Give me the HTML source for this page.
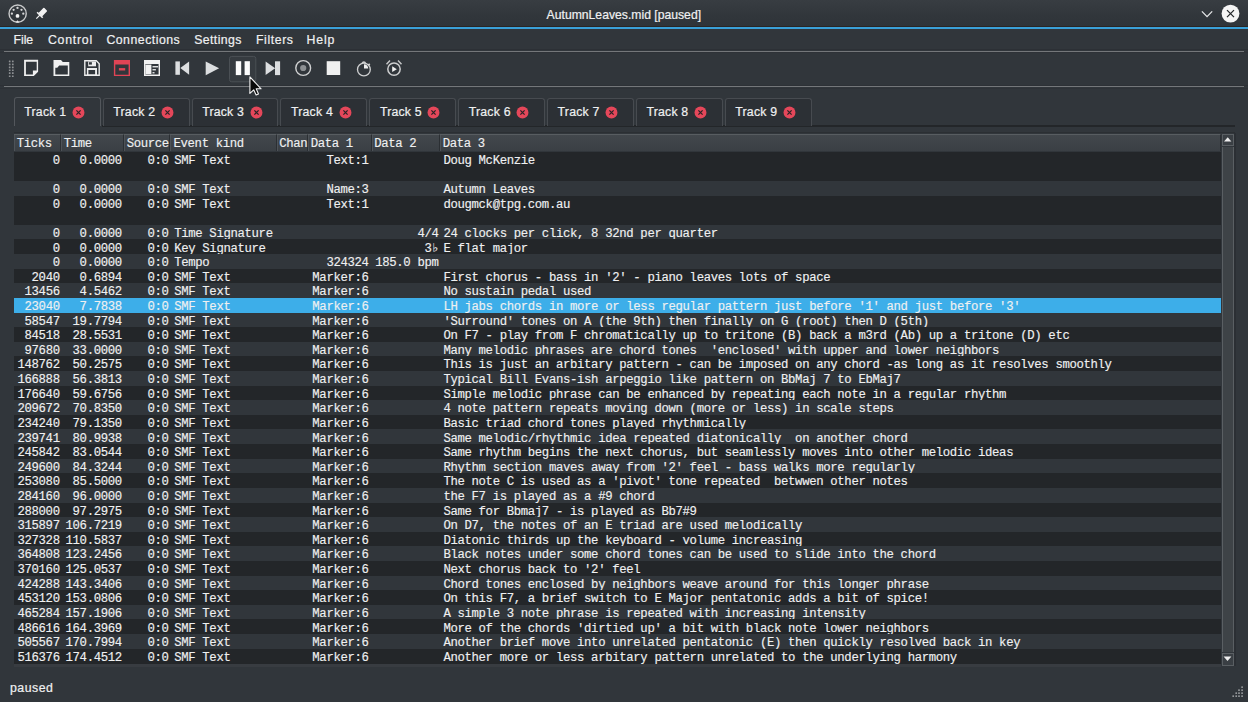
<!DOCTYPE html>
<html><head><meta charset="utf-8"><style>
*{margin:0;padding:0;box-sizing:border-box}
html,body{width:1248px;height:702px;overflow:hidden;background:#31363b}
body{position:relative;font-family:"Liberation Sans",sans-serif;color:#eff0f1}
div,svg{position:absolute}
.ui{font-size:12.3px;line-height:15px;white-space:pre;color:#eff0f1;-webkit-text-stroke:0.2px #eff0f1}
.m{font-family:"Liberation Mono",monospace;font-size:12.3px;letter-spacing:-0.345px;-webkit-text-stroke:0.15px #eff0f1;line-height:14.62px;white-space:pre;color:#eff0f1}
.row{left:13.7px;width:1207.6px}
.hs{top:133.9px;height:17.3px;background:linear-gradient(#42474c,#3a3f44);border-top:1px solid #585d61;border-right:1px solid #2b2f33;box-shadow:inset 1px 0 0 #4e5358}
.tab{border:1px solid #474b50;border-bottom:none;border-radius:3px 3px 0 0;background:#2c3035}
.tab.act{background:#31363b;border-color:#53575c}
</style></head><body>
<!-- titlebar -->
<div style="left:0;top:0;width:1248px;height:26px;background:linear-gradient(#383d42,#31363b 60%,#2f3439)"></div>
<div style="left:0;top:26px;width:1248px;height:1px;background:#2a2624"></div>
<div style="left:0;top:27px;width:1248px;height:2.2px;background:#3aa0d8"></div>
<div class="ui" style="left:546.6px;top:7.8px;font-size:12.2px">AutumnLeaves.mid [paused]</div>
<div class="ui" style="left:13.4px;top:32.9px">File</div>
<div class="ui" style="left:47.9px;top:32.9px;letter-spacing:0.78px">Control</div>
<div class="ui" style="left:106.4px;top:32.9px;letter-spacing:0.5px">Connections</div>
<div class="ui" style="left:194.2px;top:32.9px;letter-spacing:0.4px">Settings</div>
<div class="ui" style="left:256px;top:32.9px;letter-spacing:0.58px">Filters</div>
<div class="ui" style="left:306.6px;top:32.9px;letter-spacing:0.8px">Help</div>
<div style="left:0;top:49px;width:1248px;height:1.3px;background:#2c3035"></div>
<div style="left:4px;top:50.7px;width:1240px;height:1.4px;background:#74777a"></div>
<div style="left:0;top:52.3px;width:1248px;height:1px;background:#2e3237"></div>
<div style="left:0;top:84.5px;width:1248px;height:1.3px;background:#2d3136"></div>
<div style="left:4px;top:86px;width:1240px;height:1.4px;background:#74777a"></div>
<div style="left:0;top:87.6px;width:1248px;height:1px;background:#2e3237"></div>
<!-- tabs -->
<div style="left:102px;top:125.3px;width:1133px;height:1.6px;background:#232629"></div>
<div class="tab act" style="left:14.20px;top:96.6px;width:86.90px;height:29.40px"></div>
<div class="ui" style="left:24.30px;top:104.5px;letter-spacing:0.2px">Track 1</div>
<svg class="ic" style="left:72.30px;top:105.60px" width="13" height="13" viewBox="0 0 13 13"><circle cx="6.5" cy="6.5" r="5.95" fill="#e5475a"/><path d="M4.4 4.4L8.6 8.6M8.6 4.4L4.4 8.6" stroke="#2a2326" stroke-width="1.25"/></svg>
<div class="tab" style="left:102.70px;top:98.4px;width:86.90px;height:27.60px"></div>
<div class="ui" style="left:113.30px;top:104.5px;letter-spacing:0.2px">Track 2</div>
<svg class="ic" style="left:160.90px;top:105.60px" width="13" height="13" viewBox="0 0 13 13"><circle cx="6.5" cy="6.5" r="5.95" fill="#e5475a"/><path d="M4.4 4.4L8.6 8.6M8.6 4.4L4.4 8.6" stroke="#2a2326" stroke-width="1.25"/></svg>
<div class="tab" style="left:191.56px;top:98.4px;width:86.90px;height:27.60px"></div>
<div class="ui" style="left:202.16px;top:104.5px;letter-spacing:0.2px">Track 3</div>
<svg class="ic" style="left:249.76px;top:105.60px" width="13" height="13" viewBox="0 0 13 13"><circle cx="6.5" cy="6.5" r="5.95" fill="#e5475a"/><path d="M4.4 4.4L8.6 8.6M8.6 4.4L4.4 8.6" stroke="#2a2326" stroke-width="1.25"/></svg>
<div class="tab" style="left:280.42px;top:98.4px;width:86.90px;height:27.60px"></div>
<div class="ui" style="left:291.02px;top:104.5px;letter-spacing:0.2px">Track 4</div>
<svg class="ic" style="left:338.62px;top:105.60px" width="13" height="13" viewBox="0 0 13 13"><circle cx="6.5" cy="6.5" r="5.95" fill="#e5475a"/><path d="M4.4 4.4L8.6 8.6M8.6 4.4L4.4 8.6" stroke="#2a2326" stroke-width="1.25"/></svg>
<div class="tab" style="left:369.28px;top:98.4px;width:86.90px;height:27.60px"></div>
<div class="ui" style="left:379.88px;top:104.5px;letter-spacing:0.2px">Track 5</div>
<svg class="ic" style="left:427.48px;top:105.60px" width="13" height="13" viewBox="0 0 13 13"><circle cx="6.5" cy="6.5" r="5.95" fill="#e5475a"/><path d="M4.4 4.4L8.6 8.6M8.6 4.4L4.4 8.6" stroke="#2a2326" stroke-width="1.25"/></svg>
<div class="tab" style="left:458.14px;top:98.4px;width:86.90px;height:27.60px"></div>
<div class="ui" style="left:468.74px;top:104.5px;letter-spacing:0.2px">Track 6</div>
<svg class="ic" style="left:516.34px;top:105.60px" width="13" height="13" viewBox="0 0 13 13"><circle cx="6.5" cy="6.5" r="5.95" fill="#e5475a"/><path d="M4.4 4.4L8.6 8.6M8.6 4.4L4.4 8.6" stroke="#2a2326" stroke-width="1.25"/></svg>
<div class="tab" style="left:547.00px;top:98.4px;width:86.90px;height:27.60px"></div>
<div class="ui" style="left:557.60px;top:104.5px;letter-spacing:0.2px">Track 7</div>
<svg class="ic" style="left:605.20px;top:105.60px" width="13" height="13" viewBox="0 0 13 13"><circle cx="6.5" cy="6.5" r="5.95" fill="#e5475a"/><path d="M4.4 4.4L8.6 8.6M8.6 4.4L4.4 8.6" stroke="#2a2326" stroke-width="1.25"/></svg>
<div class="tab" style="left:635.86px;top:98.4px;width:86.90px;height:27.60px"></div>
<div class="ui" style="left:646.46px;top:104.5px;letter-spacing:0.2px">Track 8</div>
<svg class="ic" style="left:694.06px;top:105.60px" width="13" height="13" viewBox="0 0 13 13"><circle cx="6.5" cy="6.5" r="5.95" fill="#e5475a"/><path d="M4.4 4.4L8.6 8.6M8.6 4.4L4.4 8.6" stroke="#2a2326" stroke-width="1.25"/></svg>
<div class="tab" style="left:724.72px;top:98.4px;width:86.90px;height:27.60px"></div>
<div class="ui" style="left:735.32px;top:104.5px;letter-spacing:0.2px">Track 9</div>
<svg class="ic" style="left:782.92px;top:105.60px" width="13" height="13" viewBox="0 0 13 13"><circle cx="6.5" cy="6.5" r="5.95" fill="#e5475a"/><path d="M4.4 4.4L8.6 8.6M8.6 4.4L4.4 8.6" stroke="#2a2326" stroke-width="1.25"/></svg>
<!-- table -->
<div style="left:13.7px;top:151.8px;width:1207.6px;height:512px;background:#232629"></div>
<div style="left:13.7px;top:664px;width:1207.6px;height:2.5px;background:#383c41"></div>
<div class="row" style="top:151.80px;height:29.53px;background:#232629"></div>
<div class="m r" style="right:1188.30px;top:153.85px;color:#eff0f1">0</div>
<div class="m r" style="right:1126.20px;top:153.85px;color:#eff0f1">0.0000</div>
<div class="m r" style="right:1079.50px;top:153.85px;color:#eff0f1">0:0</div>
<div class="m" style="left:174.20px;top:153.85px;color:#eff0f1">SMF Text</div>
<div class="m r" style="right:879.40px;top:153.85px;color:#eff0f1">Text:1</div>
<div class="m" style="left:443.40px;top:153.85px;color:#eff0f1">Doug McKenzie</div>
<div class="row" style="top:181.03px;height:14.92px;background:#31363b"></div>
<div class="m r" style="right:1188.30px;top:183.08px;color:#eff0f1">0</div>
<div class="m r" style="right:1126.20px;top:183.08px;color:#eff0f1">0.0000</div>
<div class="m r" style="right:1079.50px;top:183.08px;color:#eff0f1">0:0</div>
<div class="m" style="left:174.20px;top:183.08px;color:#eff0f1">SMF Text</div>
<div class="m r" style="right:879.40px;top:183.08px;color:#eff0f1">Name:3</div>
<div class="m" style="left:443.40px;top:183.08px;color:#eff0f1">Autumn Leaves</div>
<div class="row" style="top:195.65px;height:29.53px;background:#232629"></div>
<div class="m r" style="right:1188.30px;top:197.70px;color:#eff0f1">0</div>
<div class="m r" style="right:1126.20px;top:197.70px;color:#eff0f1">0.0000</div>
<div class="m r" style="right:1079.50px;top:197.70px;color:#eff0f1">0:0</div>
<div class="m" style="left:174.20px;top:197.70px;color:#eff0f1">SMF Text</div>
<div class="m r" style="right:879.40px;top:197.70px;color:#eff0f1">Text:1</div>
<div class="m" style="left:443.40px;top:197.70px;color:#eff0f1">dougmck@tpg.com.au</div>
<div class="row" style="top:224.88px;height:14.92px;background:#31363b"></div>
<div class="m r" style="right:1188.30px;top:226.93px;color:#eff0f1">0</div>
<div class="m r" style="right:1126.20px;top:226.93px;color:#eff0f1">0.0000</div>
<div class="m r" style="right:1079.50px;top:226.93px;color:#eff0f1">0:0</div>
<div class="m" style="left:174.20px;top:226.93px;color:#eff0f1">Time Signature</div>
<div class="m r" style="right:809.50px;top:226.93px;color:#eff0f1">4/4</div>
<div class="m" style="left:443.40px;top:226.93px;color:#eff0f1">24 clocks per click, 8 32nd per quarter</div>
<div class="row" style="top:239.49px;height:14.92px;background:#232629"></div>
<div class="m r" style="right:1188.30px;top:241.54px;color:#eff0f1">0</div>
<div class="m r" style="right:1126.20px;top:241.54px;color:#eff0f1">0.0000</div>
<div class="m r" style="right:1079.50px;top:241.54px;color:#eff0f1">0:0</div>
<div class="m" style="left:174.20px;top:241.54px;color:#eff0f1">Key Signature</div>
<div class="m r" style="right:809.50px;top:241.54px;color:#eff0f1">3♭</div>
<div class="m" style="left:443.40px;top:241.54px;color:#eff0f1">E flat major</div>
<div class="row" style="top:254.11px;height:14.92px;background:#31363b"></div>
<div class="m r" style="right:1188.30px;top:256.16px;color:#eff0f1">0</div>
<div class="m r" style="right:1126.20px;top:256.16px;color:#eff0f1">0.0000</div>
<div class="m r" style="right:1079.50px;top:256.16px;color:#eff0f1">0:0</div>
<div class="m" style="left:174.20px;top:256.16px;color:#eff0f1">Tempo</div>
<div class="m r" style="right:879.40px;top:256.16px;color:#eff0f1">324324</div>
<div class="m r" style="right:809.50px;top:256.16px;color:#eff0f1">185.0 bpm</div>
<div class="row" style="top:268.72px;height:14.92px;background:#232629"></div>
<div class="m r" style="right:1188.30px;top:270.77px;color:#eff0f1">2040</div>
<div class="m r" style="right:1126.20px;top:270.77px;color:#eff0f1">0.6894</div>
<div class="m r" style="right:1079.50px;top:270.77px;color:#eff0f1">0:0</div>
<div class="m" style="left:174.20px;top:270.77px;color:#eff0f1">SMF Text</div>
<div class="m r" style="right:879.40px;top:270.77px;color:#eff0f1">Marker:6</div>
<div class="m" style="left:443.40px;top:270.77px;color:#eff0f1">First chorus - bass in &#x27;2&#x27; - piano leaves lots of space</div>
<div class="row" style="top:283.34px;height:14.92px;background:#31363b"></div>
<div class="m r" style="right:1188.30px;top:285.39px;color:#eff0f1">13456</div>
<div class="m r" style="right:1126.20px;top:285.39px;color:#eff0f1">4.5462</div>
<div class="m r" style="right:1079.50px;top:285.39px;color:#eff0f1">0:0</div>
<div class="m" style="left:174.20px;top:285.39px;color:#eff0f1">SMF Text</div>
<div class="m r" style="right:879.40px;top:285.39px;color:#eff0f1">Marker:6</div>
<div class="m" style="left:443.40px;top:285.39px;color:#eff0f1">No sustain pedal used</div>
<div class="row" style="top:297.95px;height:14.92px;background:#3daee9"></div>
<div class="m r" style="right:1188.30px;top:300.00px;color:#eff0f1">23040</div>
<div class="m r" style="right:1126.20px;top:300.00px;color:#eff0f1">7.7838</div>
<div class="m r" style="right:1079.50px;top:300.00px;color:#eff0f1">0:0</div>
<div class="m" style="left:174.20px;top:300.00px;color:#eff0f1">SMF Text</div>
<div class="m r" style="right:879.40px;top:300.00px;color:#eff0f1">Marker:6</div>
<div class="m" style="left:443.40px;top:300.00px;color:#eff0f1">LH jabs chords in more or less regular pattern just before &#x27;1&#x27; and just before &#x27;3&#x27;</div>
<div class="row" style="top:312.57px;height:14.92px;background:#31363b"></div>
<div class="m r" style="right:1188.30px;top:314.62px;color:#eff0f1">58547</div>
<div class="m r" style="right:1126.20px;top:314.62px;color:#eff0f1">19.7794</div>
<div class="m r" style="right:1079.50px;top:314.62px;color:#eff0f1">0:0</div>
<div class="m" style="left:174.20px;top:314.62px;color:#eff0f1">SMF Text</div>
<div class="m r" style="right:879.40px;top:314.62px;color:#eff0f1">Marker:6</div>
<div class="m" style="left:443.40px;top:314.62px;color:#eff0f1">&#x27;Surround&#x27; tones on A (the 9th) then finally on G (root) then D (5th)</div>
<div class="row" style="top:327.18px;height:14.92px;background:#232629"></div>
<div class="m r" style="right:1188.30px;top:329.23px;color:#eff0f1">84518</div>
<div class="m r" style="right:1126.20px;top:329.23px;color:#eff0f1">28.5531</div>
<div class="m r" style="right:1079.50px;top:329.23px;color:#eff0f1">0:0</div>
<div class="m" style="left:174.20px;top:329.23px;color:#eff0f1">SMF Text</div>
<div class="m r" style="right:879.40px;top:329.23px;color:#eff0f1">Marker:6</div>
<div class="m" style="left:443.40px;top:329.23px;color:#eff0f1">On F7 - play from F chromatically up to tritone (B) back a m3rd (Ab) up a tritone (D) etc</div>
<div class="row" style="top:341.80px;height:14.92px;background:#31363b"></div>
<div class="m r" style="right:1188.30px;top:343.85px;color:#eff0f1">97680</div>
<div class="m r" style="right:1126.20px;top:343.85px;color:#eff0f1">33.0000</div>
<div class="m r" style="right:1079.50px;top:343.85px;color:#eff0f1">0:0</div>
<div class="m" style="left:174.20px;top:343.85px;color:#eff0f1">SMF Text</div>
<div class="m r" style="right:879.40px;top:343.85px;color:#eff0f1">Marker:6</div>
<div class="m" style="left:443.40px;top:343.85px;color:#eff0f1">Many melodic phrases are chord tones  &#x27;enclosed&#x27; with upper and lower neighbors</div>
<div class="row" style="top:356.41px;height:14.92px;background:#232629"></div>
<div class="m r" style="right:1188.30px;top:358.46px;color:#eff0f1">148762</div>
<div class="m r" style="right:1126.20px;top:358.46px;color:#eff0f1">50.2575</div>
<div class="m r" style="right:1079.50px;top:358.46px;color:#eff0f1">0:0</div>
<div class="m" style="left:174.20px;top:358.46px;color:#eff0f1">SMF Text</div>
<div class="m r" style="right:879.40px;top:358.46px;color:#eff0f1">Marker:6</div>
<div class="m" style="left:443.40px;top:358.46px;color:#eff0f1">This is just an arbitary pattern - can be imposed on any chord -as long as it resolves smoothly</div>
<div class="row" style="top:371.03px;height:14.92px;background:#31363b"></div>
<div class="m r" style="right:1188.30px;top:373.08px;color:#eff0f1">166888</div>
<div class="m r" style="right:1126.20px;top:373.08px;color:#eff0f1">56.3813</div>
<div class="m r" style="right:1079.50px;top:373.08px;color:#eff0f1">0:0</div>
<div class="m" style="left:174.20px;top:373.08px;color:#eff0f1">SMF Text</div>
<div class="m r" style="right:879.40px;top:373.08px;color:#eff0f1">Marker:6</div>
<div class="m" style="left:443.40px;top:373.08px;color:#eff0f1">Typical Bill Evans-ish arpeggio like pattern on BbMaj 7 to EbMaj7</div>
<div class="row" style="top:385.64px;height:14.92px;background:#232629"></div>
<div class="m r" style="right:1188.30px;top:387.69px;color:#eff0f1">176640</div>
<div class="m r" style="right:1126.20px;top:387.69px;color:#eff0f1">59.6756</div>
<div class="m r" style="right:1079.50px;top:387.69px;color:#eff0f1">0:0</div>
<div class="m" style="left:174.20px;top:387.69px;color:#eff0f1">SMF Text</div>
<div class="m r" style="right:879.40px;top:387.69px;color:#eff0f1">Marker:6</div>
<div class="m" style="left:443.40px;top:387.69px;color:#eff0f1">Simple melodic phrase can be enhanced by repeating each note in a regular rhythm</div>
<div class="row" style="top:400.26px;height:14.92px;background:#31363b"></div>
<div class="m r" style="right:1188.30px;top:402.31px;color:#eff0f1">209672</div>
<div class="m r" style="right:1126.20px;top:402.31px;color:#eff0f1">70.8350</div>
<div class="m r" style="right:1079.50px;top:402.31px;color:#eff0f1">0:0</div>
<div class="m" style="left:174.20px;top:402.31px;color:#eff0f1">SMF Text</div>
<div class="m r" style="right:879.40px;top:402.31px;color:#eff0f1">Marker:6</div>
<div class="m" style="left:443.40px;top:402.31px;color:#eff0f1">4 note pattern repeats moving down (more or less) in scale steps</div>
<div class="row" style="top:414.87px;height:14.92px;background:#232629"></div>
<div class="m r" style="right:1188.30px;top:416.92px;color:#eff0f1">234240</div>
<div class="m r" style="right:1126.20px;top:416.92px;color:#eff0f1">79.1350</div>
<div class="m r" style="right:1079.50px;top:416.92px;color:#eff0f1">0:0</div>
<div class="m" style="left:174.20px;top:416.92px;color:#eff0f1">SMF Text</div>
<div class="m r" style="right:879.40px;top:416.92px;color:#eff0f1">Marker:6</div>
<div class="m" style="left:443.40px;top:416.92px;color:#eff0f1">Basic triad chord tones played rhythmically</div>
<div class="row" style="top:429.49px;height:14.92px;background:#31363b"></div>
<div class="m r" style="right:1188.30px;top:431.54px;color:#eff0f1">239741</div>
<div class="m r" style="right:1126.20px;top:431.54px;color:#eff0f1">80.9938</div>
<div class="m r" style="right:1079.50px;top:431.54px;color:#eff0f1">0:0</div>
<div class="m" style="left:174.20px;top:431.54px;color:#eff0f1">SMF Text</div>
<div class="m r" style="right:879.40px;top:431.54px;color:#eff0f1">Marker:6</div>
<div class="m" style="left:443.40px;top:431.54px;color:#eff0f1">Same melodic/rhythmic idea repeated diatonically  on another chord</div>
<div class="row" style="top:444.10px;height:14.92px;background:#232629"></div>
<div class="m r" style="right:1188.30px;top:446.15px;color:#eff0f1">245842</div>
<div class="m r" style="right:1126.20px;top:446.15px;color:#eff0f1">83.0544</div>
<div class="m r" style="right:1079.50px;top:446.15px;color:#eff0f1">0:0</div>
<div class="m" style="left:174.20px;top:446.15px;color:#eff0f1">SMF Text</div>
<div class="m r" style="right:879.40px;top:446.15px;color:#eff0f1">Marker:6</div>
<div class="m" style="left:443.40px;top:446.15px;color:#eff0f1">Same rhythm begins the next chorus, but seamlessly moves into other melodic ideas</div>
<div class="row" style="top:458.72px;height:14.92px;background:#31363b"></div>
<div class="m r" style="right:1188.30px;top:460.77px;color:#eff0f1">249600</div>
<div class="m r" style="right:1126.20px;top:460.77px;color:#eff0f1">84.3244</div>
<div class="m r" style="right:1079.50px;top:460.77px;color:#eff0f1">0:0</div>
<div class="m" style="left:174.20px;top:460.77px;color:#eff0f1">SMF Text</div>
<div class="m r" style="right:879.40px;top:460.77px;color:#eff0f1">Marker:6</div>
<div class="m" style="left:443.40px;top:460.77px;color:#eff0f1">Rhythm section maves away from &#x27;2&#x27; feel - bass walks more regularly</div>
<div class="row" style="top:473.33px;height:14.92px;background:#232629"></div>
<div class="m r" style="right:1188.30px;top:475.38px;color:#eff0f1">253080</div>
<div class="m r" style="right:1126.20px;top:475.38px;color:#eff0f1">85.5000</div>
<div class="m r" style="right:1079.50px;top:475.38px;color:#eff0f1">0:0</div>
<div class="m" style="left:174.20px;top:475.38px;color:#eff0f1">SMF Text</div>
<div class="m r" style="right:879.40px;top:475.38px;color:#eff0f1">Marker:6</div>
<div class="m" style="left:443.40px;top:475.38px;color:#eff0f1">The note C is used as a &#x27;pivot&#x27; tone repeated  betwwen other notes</div>
<div class="row" style="top:487.95px;height:14.92px;background:#31363b"></div>
<div class="m r" style="right:1188.30px;top:490.00px;color:#eff0f1">284160</div>
<div class="m r" style="right:1126.20px;top:490.00px;color:#eff0f1">96.0000</div>
<div class="m r" style="right:1079.50px;top:490.00px;color:#eff0f1">0:0</div>
<div class="m" style="left:174.20px;top:490.00px;color:#eff0f1">SMF Text</div>
<div class="m r" style="right:879.40px;top:490.00px;color:#eff0f1">Marker:6</div>
<div class="m" style="left:443.40px;top:490.00px;color:#eff0f1">the F7 is played as a #9 chord</div>
<div class="row" style="top:502.56px;height:14.92px;background:#232629"></div>
<div class="m r" style="right:1188.30px;top:504.61px;color:#eff0f1">288000</div>
<div class="m r" style="right:1126.20px;top:504.61px;color:#eff0f1">97.2975</div>
<div class="m r" style="right:1079.50px;top:504.61px;color:#eff0f1">0:0</div>
<div class="m" style="left:174.20px;top:504.61px;color:#eff0f1">SMF Text</div>
<div class="m r" style="right:879.40px;top:504.61px;color:#eff0f1">Marker:6</div>
<div class="m" style="left:443.40px;top:504.61px;color:#eff0f1">Same for Bbmaj7 - is played as Bb7#9</div>
<div class="row" style="top:517.18px;height:14.92px;background:#31363b"></div>
<div class="m r" style="right:1188.30px;top:519.23px;color:#eff0f1">315897</div>
<div class="m r" style="right:1126.20px;top:519.23px;color:#eff0f1">106.7219</div>
<div class="m r" style="right:1079.50px;top:519.23px;color:#eff0f1">0:0</div>
<div class="m" style="left:174.20px;top:519.23px;color:#eff0f1">SMF Text</div>
<div class="m r" style="right:879.40px;top:519.23px;color:#eff0f1">Marker:6</div>
<div class="m" style="left:443.40px;top:519.23px;color:#eff0f1">On D7, the notes of an E triad are used melodically</div>
<div class="row" style="top:531.79px;height:14.92px;background:#232629"></div>
<div class="m r" style="right:1188.30px;top:533.84px;color:#eff0f1">327328</div>
<div class="m r" style="right:1126.20px;top:533.84px;color:#eff0f1">110.5837</div>
<div class="m r" style="right:1079.50px;top:533.84px;color:#eff0f1">0:0</div>
<div class="m" style="left:174.20px;top:533.84px;color:#eff0f1">SMF Text</div>
<div class="m r" style="right:879.40px;top:533.84px;color:#eff0f1">Marker:6</div>
<div class="m" style="left:443.40px;top:533.84px;color:#eff0f1">Diatonic thirds up the keyboard - volume increasing</div>
<div class="row" style="top:546.41px;height:14.92px;background:#31363b"></div>
<div class="m r" style="right:1188.30px;top:548.46px;color:#eff0f1">364808</div>
<div class="m r" style="right:1126.20px;top:548.46px;color:#eff0f1">123.2456</div>
<div class="m r" style="right:1079.50px;top:548.46px;color:#eff0f1">0:0</div>
<div class="m" style="left:174.20px;top:548.46px;color:#eff0f1">SMF Text</div>
<div class="m r" style="right:879.40px;top:548.46px;color:#eff0f1">Marker:6</div>
<div class="m" style="left:443.40px;top:548.46px;color:#eff0f1">Black notes under some chord tones can be used to slide into the chord</div>
<div class="row" style="top:561.02px;height:14.92px;background:#232629"></div>
<div class="m r" style="right:1188.30px;top:563.07px;color:#eff0f1">370160</div>
<div class="m r" style="right:1126.20px;top:563.07px;color:#eff0f1">125.0537</div>
<div class="m r" style="right:1079.50px;top:563.07px;color:#eff0f1">0:0</div>
<div class="m" style="left:174.20px;top:563.07px;color:#eff0f1">SMF Text</div>
<div class="m r" style="right:879.40px;top:563.07px;color:#eff0f1">Marker:6</div>
<div class="m" style="left:443.40px;top:563.07px;color:#eff0f1">Next chorus back to &#x27;2&#x27; feel</div>
<div class="row" style="top:575.64px;height:14.92px;background:#31363b"></div>
<div class="m r" style="right:1188.30px;top:577.69px;color:#eff0f1">424288</div>
<div class="m r" style="right:1126.20px;top:577.69px;color:#eff0f1">143.3406</div>
<div class="m r" style="right:1079.50px;top:577.69px;color:#eff0f1">0:0</div>
<div class="m" style="left:174.20px;top:577.69px;color:#eff0f1">SMF Text</div>
<div class="m r" style="right:879.40px;top:577.69px;color:#eff0f1">Marker:6</div>
<div class="m" style="left:443.40px;top:577.69px;color:#eff0f1">Chord tones enclosed by neighbors weave around for this longer phrase</div>
<div class="row" style="top:590.25px;height:14.92px;background:#232629"></div>
<div class="m r" style="right:1188.30px;top:592.30px;color:#eff0f1">453120</div>
<div class="m r" style="right:1126.20px;top:592.30px;color:#eff0f1">153.0806</div>
<div class="m r" style="right:1079.50px;top:592.30px;color:#eff0f1">0:0</div>
<div class="m" style="left:174.20px;top:592.30px;color:#eff0f1">SMF Text</div>
<div class="m r" style="right:879.40px;top:592.30px;color:#eff0f1">Marker:6</div>
<div class="m" style="left:443.40px;top:592.30px;color:#eff0f1">On this F7, a brief switch to E Major pentatonic adds a bit of spice!</div>
<div class="row" style="top:604.87px;height:14.92px;background:#31363b"></div>
<div class="m r" style="right:1188.30px;top:606.92px;color:#eff0f1">465284</div>
<div class="m r" style="right:1126.20px;top:606.92px;color:#eff0f1">157.1906</div>
<div class="m r" style="right:1079.50px;top:606.92px;color:#eff0f1">0:0</div>
<div class="m" style="left:174.20px;top:606.92px;color:#eff0f1">SMF Text</div>
<div class="m r" style="right:879.40px;top:606.92px;color:#eff0f1">Marker:6</div>
<div class="m" style="left:443.40px;top:606.92px;color:#eff0f1">A simple 3 note phrase is repeated with increasing intensity</div>
<div class="row" style="top:619.48px;height:14.92px;background:#232629"></div>
<div class="m r" style="right:1188.30px;top:621.53px;color:#eff0f1">486616</div>
<div class="m r" style="right:1126.20px;top:621.53px;color:#eff0f1">164.3969</div>
<div class="m r" style="right:1079.50px;top:621.53px;color:#eff0f1">0:0</div>
<div class="m" style="left:174.20px;top:621.53px;color:#eff0f1">SMF Text</div>
<div class="m r" style="right:879.40px;top:621.53px;color:#eff0f1">Marker:6</div>
<div class="m" style="left:443.40px;top:621.53px;color:#eff0f1">More of the chords &#x27;dirtied up&#x27; a bit with black note lower neighbors</div>
<div class="row" style="top:634.10px;height:14.92px;background:#31363b"></div>
<div class="m r" style="right:1188.30px;top:636.15px;color:#eff0f1">505567</div>
<div class="m r" style="right:1126.20px;top:636.15px;color:#eff0f1">170.7994</div>
<div class="m r" style="right:1079.50px;top:636.15px;color:#eff0f1">0:0</div>
<div class="m" style="left:174.20px;top:636.15px;color:#eff0f1">SMF Text</div>
<div class="m r" style="right:879.40px;top:636.15px;color:#eff0f1">Marker:6</div>
<div class="m" style="left:443.40px;top:636.15px;color:#eff0f1">Another brief move into unrelated pentatonic (E) then quickly resolved back in key</div>
<div class="row" style="top:648.71px;height:14.92px;background:#232629"></div>
<div class="m r" style="right:1188.30px;top:650.76px;color:#eff0f1">516376</div>
<div class="m r" style="right:1126.20px;top:650.76px;color:#eff0f1">174.4512</div>
<div class="m r" style="right:1079.50px;top:650.76px;color:#eff0f1">0:0</div>
<div class="m" style="left:174.20px;top:650.76px;color:#eff0f1">SMF Text</div>
<div class="m r" style="right:879.40px;top:650.76px;color:#eff0f1">Marker:6</div>
<div class="m" style="left:443.40px;top:650.76px;color:#eff0f1">Another more or less arbitary pattern unrelated to the underlying harmony</div>
<div style="left:13.7px;top:132px;width:1221px;height:1.4px;background:#2b2f33"></div>
<div class="hs" style="left:14.00px;width:47.00px"></div>
<div class="m" style="left:16.70px;top:136.9px">Ticks</div>
<div class="hs" style="left:61.00px;width:63.00px"></div>
<div class="m" style="left:63.70px;top:136.9px">Time</div>
<div class="hs" style="left:124.00px;width:46.00px"></div>
<div class="m" style="left:126.70px;top:136.9px">Source</div>
<div class="hs" style="left:170.00px;width:106.50px"></div>
<div class="m" style="left:173.50px;top:136.9px">Event kind</div>
<div class="hs" style="left:276.50px;width:31.50px"></div>
<div class="m" style="left:279.20px;top:136.9px">Chan</div>
<div class="hs" style="left:308.00px;width:63.50px"></div>
<div class="m" style="left:310.70px;top:136.9px">Data 1</div>
<div class="hs" style="left:371.50px;width:68.50px"></div>
<div class="m" style="left:374.20px;top:136.9px">Data 2</div>
<div class="hs" style="left:440.00px;width:781.00px"></div>
<div class="m" style="left:442.70px;top:136.9px">Data 3</div>
<!-- scrollbar -->
<div style="left:1234.3px;top:133.3px;width:1.6px;height:533px;background:#2b2f34"></div>
<div style="left:1221.7px;top:133.6px;width:12.5px;height:532.4px;background:#31363b"></div>
<div style="left:1221.7px;top:146.7px;width:12.5px;height:505px;background:#3e4347;border-left:1px solid #5a5f63;border-right:1px solid #5a5f63"></div>
<div style="left:1221.7px;top:133.6px;width:12.5px;height:12.2px;background:#3a3f44;border:1px solid #5a5f63"></div>
<div style="left:1221.7px;top:653px;width:12.5px;height:12.6px;background:#3a3f44;border:1px solid #5a5f63"></div>

<!-- app icon -->
<svg style="left:0;top:0" width="60" height="27" viewBox="0 0 60 27">
<circle cx="17.65" cy="13.65" r="8.6" fill="none" stroke="#c9cacb" stroke-width="1.4"/>
<g fill="#d6d7d8"><circle cx="17.5" cy="7.9" r="1.15"/><circle cx="13.6" cy="9.8" r="1.15"/><circle cx="21.5" cy="9.8" r="1.15"/><circle cx="11.9" cy="13.65" r="1.15"/><circle cx="23.3" cy="13.65" r="1.15"/></g>
<circle cx="17.5" cy="15.9" r="1.9" fill="#f4f4f4"/>
<path d="M15.6 22.4 L17.5 20.2 L19.4 22.4 Z" fill="#e8e8e8"/>
<g transform="translate(36.3 18.6) rotate(-45)" fill="#f2f2f2">
<rect x="0" y="-0.6" width="5" height="1.2"/>
<rect x="4.3" y="-3.9" width="1.6" height="7.8"/>
<rect x="5.5" y="-2.5" width="7.7" height="5" rx="0.8"/>
</g>
</svg>
<svg style="left:1190px;top:0" width="58" height="27" viewBox="1190 0 58 27">
<polyline points="1201.9,11.4 1207.05,16.6 1212.2,11.4" fill="none" stroke="#e6e7e8" stroke-width="1.3"/>
<circle cx="1230.5" cy="13.6" r="8.9" fill="#f5f5f5"/>
<path d="M1227 10.1 L1234 17.1 M1234 10.1 L1227 17.1" stroke="#232629" stroke-width="1.25"/>
</svg>
<!-- toolbar -->
<svg style="left:0;top:52px" width="420" height="34" viewBox="0 52 420 34">
<g fill="#8e9194"><rect x="8.85" y="60.6" width="1.7" height="1.7" rx="0.3"/><rect x="11.95" y="60.6" width="1.7" height="1.7" rx="0.3"/><rect x="8.85" y="63.6" width="1.7" height="1.7" rx="0.3"/><rect x="11.95" y="63.6" width="1.7" height="1.7" rx="0.3"/><rect x="8.85" y="66.5" width="1.7" height="1.7" rx="0.3"/><rect x="11.95" y="66.5" width="1.7" height="1.7" rx="0.3"/><rect x="8.85" y="69.4" width="1.7" height="1.7" rx="0.3"/><rect x="11.95" y="69.4" width="1.7" height="1.7" rx="0.3"/><rect x="8.85" y="72.3" width="1.7" height="1.7" rx="0.3"/><rect x="11.95" y="72.3" width="1.7" height="1.7" rx="0.3"/><rect x="8.85" y="75.4" width="1.7" height="1.7" rx="0.3"/><rect x="11.95" y="75.4" width="1.7" height="1.7" rx="0.3"/></g>
<!-- new -->
<path fill="#f0f0f0" fill-rule="evenodd" d="M24.1 59.8 H38.1 V71.8 L33.8 76.1 H24.1 Z M25.9 61.8 V74.6 H32.9 V70.5 H36.7 V61.8 Z"/>
<!-- open -->
<path fill="#f0f0f0" fill-rule="evenodd" d="M53.5 60.1 H61 L62.8 62 H69.3 V76.1 H53.5 Z M55.3 67.7 H57.3 L59.2 65.5 H67.8 V74.6 H55.3 Z"/>
<!-- save -->
<path fill="#ececec" fill-rule="evenodd" d="M84.1 60.1 H96.6 L99.9 63.5 V75.9 H84.1 Z M85.5 61.5 V74.5 H98.5 V63.9 L96.1 61.5 Z"/>
<rect x="88.2" y="61.5" width="7.8" height="4.8" fill="#ececec"/>
<rect x="89" y="62.2" width="2.9" height="2.4" fill="#31363b"/>
<path fill="#ececec" fill-rule="evenodd" d="M86.9 68.1 H97 V75 H86.9 Z M88.4 70 V74.6 H95.1 V70 Z"/>
<!-- red window -->
<path fill="#e04455" fill-rule="evenodd" d="M113.9 60.1 H130 V76.1 H113.9 Z M115.3 64.4 V74.7 H128.6 V64.4 Z"/>
<rect x="118.9" y="68.1" width="6.3" height="2.4" fill="#e04455"/>
<!-- properties -->
<path fill="#f2f2f2" fill-rule="evenodd" d="M144 60 H160 V76 H144 Z M145.4 63.9 V74.5 H158.6 V63.9 Z"/>
<rect x="145.4" y="64.6" width="6" height="9.5" fill="#f2f2f2"/>
<rect x="152.5" y="66.1" width="5.6" height="1.3" fill="#f2f2f2"/>
<rect x="152.5" y="69.1" width="3.4" height="1.3" fill="#f2f2f2"/>
<rect x="152.5" y="72.1" width="2" height="1.3" fill="#f2f2f2"/>
<!-- prev -->
<g fill="#dcdee0">
<rect x="175.4" y="61.4" width="4.5" height="13.4"/>
<path d="M180.3 68.1 L189.1 61.4 V74.8 Z"/>
<!-- play -->
<path d="M205.7 61.4 L219.1 68.3 L205.7 75.2 Z"/>
</g>
<!-- hover frame -->
<rect x="229.5" y="56.4" width="26.3" height="25.4" rx="2.2" fill="#363b40" stroke="#4b5055" stroke-width="1"/>
<!-- pause -->
<g fill="#fcfcfc"><rect x="235.8" y="61.2" width="5.4" height="13.9"/><rect x="244.6" y="61.2" width="5.3" height="13.9"/></g>
<!-- next -->
<g fill="#dcdee0"><path d="M265.6 61.4 L275.2 68.2 L265.6 75 Z"/><rect x="275" y="61.3" width="5.1" height="13.8"/></g>
<!-- record -->
<circle cx="303.2" cy="68" r="7.4" fill="none" stroke="#cfd0d1" stroke-width="1.4"/>
<circle cx="303.2" cy="68" r="3.1" fill="#8d9093"/>
<!-- stop -->
<rect x="326.7" y="61.2" width="13.5" height="13.8" fill="#f0f0f0"/>
<!-- stopwatch -->
<circle cx="363.9" cy="69.5" r="6.4" fill="none" stroke="#cdcecf" stroke-width="1.35"/>
<path d="M361.6 62.9 A2.3 2.1 0 0 1 366.1 62.9 Z" fill="#cdcecf"/>
<path d="M367.6 64.6 L369.2 63.2 L370.3 64.6 L369 66 Z" fill="#cdcecf"/>
<path d="M364 68.4 V64.2 A4.2 4.2 0 0 1 368.2 68.4 Z" fill="#f0f0f0"/>
<!-- alarm -->
<circle cx="394" cy="69.1" r="6.2" fill="none" stroke="#cdcecf" stroke-width="1.5"/>
<path d="M386.5 64.3 L390 60.6 M401.5 64.3 L398 60.6" stroke="#c4c5c6" stroke-width="1.5"/>
<path d="M392.2 66.3 L396.8 69.2 L392.2 72.1 Z" fill="#f0f0f0"/>
</svg>
<!-- cursor -->
<svg style="left:245px;top:72px" width="22" height="28" viewBox="0 0 22 28">
<path transform="translate(4.9 4.9)" d="M0 0 L0 16.5 L3.8 12.9 L6.2 18 L8.6 17 L6.3 11.9 L11.2 11.9 Z" fill="#0a0a0a" stroke="#f2f2f2" stroke-width="1.1" stroke-linejoin="round"/>
</svg>
<!-- scroll arrows -->
<svg style="left:1215px;top:130px" width="30" height="540" viewBox="1215 130 30 540">
<path d="M1224 141.6 L1227.7 137.3 L1231.4 141.6 Z" fill="#eeeeee"/>
<path d="M1223.6 656.6 L1231.4 656.6 L1227.5 661 Z" fill="#eeeeee"/>
</svg>
<!-- resize grip -->
<svg style="left:1226px;top:680px" width="22" height="22" viewBox="1226 680 22 22">
<g fill="#94979a"><rect x="1241.25" y="686.35" width="1.7" height="1.7" rx="0.5"/><rect x="1238.15" y="689.35" width="1.7" height="1.7" rx="0.5"/><rect x="1241.25" y="689.35" width="1.7" height="1.7" rx="0.5"/><rect x="1235.35" y="692.35" width="1.7" height="1.7" rx="0.5"/><rect x="1238.15" y="692.35" width="1.7" height="1.7" rx="0.5"/><rect x="1241.25" y="692.35" width="1.7" height="1.7" rx="0.5"/><rect x="1232.35" y="695.25" width="1.7" height="1.7" rx="0.5"/><rect x="1235.35" y="695.25" width="1.7" height="1.7" rx="0.5"/><rect x="1238.15" y="695.25" width="1.7" height="1.7" rx="0.5"/><rect x="1241.25" y="695.25" width="1.7" height="1.7" rx="0.5"/></g>
</svg>

<!-- status -->
<div class="ui" style="left:10px;top:680.8px;letter-spacing:0.5px">paused</div>
</body></html>
